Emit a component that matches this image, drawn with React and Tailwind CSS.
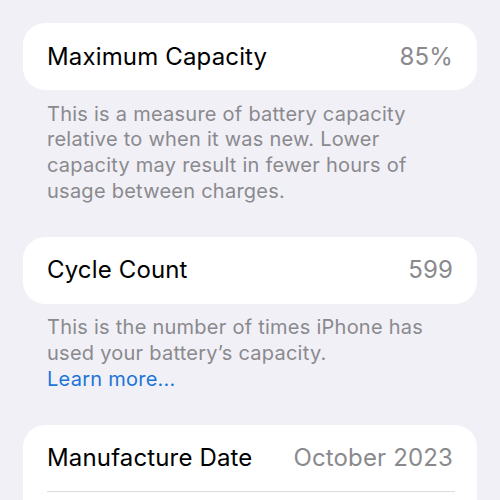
import React from "react";

/* ===================== Small Components ===================== */
function Row({ label, value, divider }) {
  return (
    <div className="relative flex h-[67px] items-center justify-between px-6">
      <span className="text-[24px] tracking-[0.15px] text-black">{label}</span>
      <span className="text-[24px] tracking-[0.15px] text-[#8a8a8e]">{value}</span>
      {divider && <div className="absolute bottom-0 left-6 right-[22px] h-px bg-[#dcdce0]" />}
    </div>
  );
}

function Footer({ children }) {
  return (
    <p className="mt-[11.5px] mb-[32px] px-6 text-[20px] leading-[25.8px] tracking-[0.25px] text-[#8a8a8e]">
      {children}
    </p>
  );
}

/* ===================== Component ===================== */
export default function App() {
  return (
    <div
      className="h-[500px] w-[500px] overflow-hidden bg-[#f1f0f6] px-[23px] pt-[23px]"
      style={{ fontFamily: "Inter, 'Noto Sans', sans-serif" }}
    >
      {/* -------- Maximum Capacity -------- */}
      <div className="rounded-[22px] bg-white">
        <Row label="Maximum Capacity" value="85%" />
      </div>
      <Footer>
        This is a measure of battery capacity relative to when it was new. Lower capacity may
        result in fewer hours of usage between charges.
      </Footer>

      {/* -------- Cycle Count -------- */}
      <div className="rounded-[22px] bg-white">
        <Row label="Cycle Count" value="599" />
      </div>
      <Footer>
        This is the number of times iPhone has used your battery’s capacity.
        <br />
        <span className="text-[#1c74d9]">Learn more...</span>
      </Footer>

      {/* -------- Manufacture Date -------- */}
      <div className="rounded-[22px] bg-white">
        <Row label="Manufacture Date" value="October 2023" divider />
        <Row label="" value="" />
      </div>
    </div>
  );
}
